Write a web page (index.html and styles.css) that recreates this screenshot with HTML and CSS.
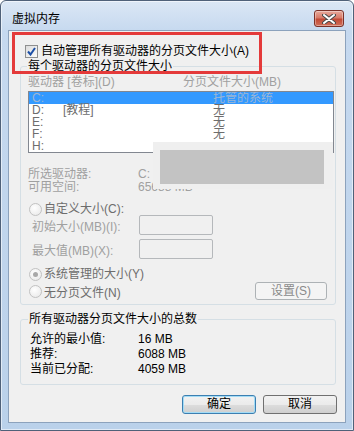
FILE: index.html
```html
<!DOCTYPE html>
<html lang="zh-CN">
<head>
    <meta charset="UTF-8">
    <title>虚拟内存</title>
    <link rel="stylesheet" href="styles.css">
</head>
<body>
    <div class="window">
        <div class="titlebar">
            <span class="title">虚拟内存</span>
            <button class="close-btn" type="button">
                <svg width="14" height="10" viewBox="0 0 14 10">
                    <path d="M2 1 L12 9 M12 1 L2 9" stroke="#4a4a4a" stroke-width="4" stroke-linecap="round"/>
                    <path d="M2 1 L12 9 M12 1 L2 9" stroke="#fff" stroke-width="2" stroke-linecap="round"/>
                </svg>
            </button>
        </div>

        <div class="client">
            <!-- highlight drawn over the dialog -->
            <div class="mark"></div>

            <label class="auto-row">
                <span class="checkbox">
                    <svg width="9" height="9" viewBox="0 0 9 9">
                        <path d="M1 4.5 L3.5 7.5 L8 1" fill="none" stroke="#1c4fa6" stroke-width="2"/>
                    </svg>
                </span>
                自动管理所有驱动器的分页文件大小(A)
            </label>

            <fieldset class="group">
                <legend>每个驱动器的分页文件大小</legend>

                <div class="col-head">
                    <span class="col-drive">驱动器 [卷标](D)</span>
                    <span>分页文件大小(MB)</span>
                </div>

                <div class="drive-list">
                    <div class="drive-row selected"><span class="d-letter">C:</span><span class="d-label"></span><span>托管的系统</span></div>
                    <div class="drive-row"><span class="d-letter">D:</span><span class="d-label">[教程]</span><span>无</span></div>
                    <div class="drive-row"><span class="d-letter">E:</span><span class="d-label"></span><span>无</span></div>
                    <div class="drive-row"><span class="d-letter">F:</span><span class="d-label"></span><span>无</span></div>
                    <div class="drive-row"><span class="d-letter">H:</span><span class="d-label"></span><span></span></div>
                </div>

                <div class="info">
                    <div class="info-row"><span class="info-key">所选驱动器:</span><span>C:</span></div>
                    <div class="info-row"><span class="info-key">可用空间:</span><span>65688 MB</span></div>
                </div>

                <div class="radio-row custom">
                    <span class="radio"></span>自定义大小(C):
                </div>
                <div class="size-row first">
                    <span class="size-key">初始大小(MB)(I):</span>
                    <span class="size-input"></span>
                </div>
                <div class="size-row">
                    <span class="size-key">最大值(MB)(X):</span>
                    <span class="size-input"></span>
                </div>

                <div class="radio-row system">
                    <span class="radio checked"></span>系统管理的大小(Y)
                </div>
                <div class="radio-row none">
                    <span class="radio-label"><span class="radio"></span>无分页文件(N)</span>
                    <button class="btn disabled" type="button">设置(S)</button>
                </div>
            </fieldset>

            <fieldset class="group totals">
                <legend>所有驱动器分页文件大小的总数</legend>
                <div class="total-row first"><span class="total-key">允许的最小值:</span><span>16 MB</span></div>
                <div class="total-row"><span class="total-key">推荐:</span><span>6088 MB</span></div>
                <div class="total-row"><span class="total-key">当前已分配:</span><span>4059 MB</span></div>
            </fieldset>

            <div class="actions">
                <button class="btn default" type="button">确定</button>
                <button class="btn" type="button">取消</button>
            </div>

            <!-- redacted area -->
            <div class="redact"><div class="redact-inner"></div></div>
        </div>
    </div>
</body>
</html>
```

FILE: styles.css
```css
* {
    box-sizing: border-box;
}
body {
    margin: 0;
    font-family: "Liberation Sans", "Noto Sans CJK SC", sans-serif;
    font-size: 12px;
    color: #000;
}
.window {
    width: 354px;
    height: 431px;
    padding: 0 7px 7px 7px;
    border: 1px solid #4f6179;
    border-radius: 6px 6px 0 0;
    background: linear-gradient(#dbe7f5, #c6d9ef 30px, #bad1ea);
    box-shadow: inset 0 0 0 1px rgba(255, 255, 255, 0.55);
}
.titlebar {
    height: 29px;
    display: flex;
    justify-content: space-between;
    align-items: flex-start;
    padding: 9px 2px 0 4px;
}
.title {
    margin-top: 2px;
    line-height: 14px;
}
.close-btn {
    width: 30px;
    height: 17px;
    padding: 0;
    display: flex;
    align-items: center;
    justify-content: center;
    border: 1px solid #7b3128;
    border-radius: 3px;
    background: linear-gradient(#e8aa9c, #d87a68 45%, #c24a36 55%, #d0705a);
    box-shadow: inset 0 0 0 1px rgba(255, 255, 255, 0.35);
}
.client {
    position: relative;
    height: 393px;
    border: 1px solid #8ca2bc;
    background-color: #f0f0f0;
}
.mark {
    position: absolute;
    left: 3px;
    top: 1px;
    width: 250px;
    height: 42px;
    border: 3px solid #e43a3a;
    z-index: 2;
}
.auto-row {
    display: flex;
    align-items: center;
    gap: 3px;
    margin: 13px 0 0 16px;
    line-height: 14px;
}
.checkbox {
    width: 13px;
    height: 13px;
    display: flex;
    align-items: center;
    justify-content: center;
    border: 1px solid #8e8f8f;
    background: linear-gradient(135deg, #dcdcdc, #fbfbfb);
}

/* group boxes */
.group {
    margin: 1px 9px 0 11px;
    padding: 0 0 4px 0;
    border: 1px solid #d5dfe5;
    border-radius: 3px;
    min-width: 0;
}
.group legend {
    margin-left: 6px;
    padding: 0 1px;
    line-height: 14px;
}
.col-head {
    display: flex;
    margin: 2px 0 0 7px;
    line-height: 14px;
    color: #a0a0a0;
}
.col-drive {
    width: 155px;
}
.drive-list {
    height: 62px;
    margin: 2px 1px 0 7px;
    border: 1px solid #828790;
    background-color: #fff;
    overflow: hidden;
}
.drive-row {
    display: flex;
    height: 12px;
    line-height: 12px;
    padding-left: 3px;
    color: #6d6d6d;
}
.drive-row.selected {
    background-color: #3399ff;
    color: #9db6d3;
}
.d-letter {
    width: 31px;
}
.d-label {
    width: 150px;
}
.info {
    margin: 15px 0 0 7px;
    color: #a0a0a0;
}
.info-row {
    display: flex;
    line-height: 13px;
}
.info-key {
    width: 110px;
}
.radio-row {
    display: flex;
    align-items: center;
    gap: 2px;
    margin-left: 8px;
    color: #6d6d6d;
}
.radio-row.custom {
    margin-top: 10px;
    line-height: 11px;
    height: 11px;
}
.radio-row.system {
    margin-top: 8px;
    line-height: 14px;
}
.radio-row.none {
    justify-content: space-between;
    margin: 1px 8px 0 8px;
    height: 18px;
}
.radio-label {
    display: flex;
    align-items: center;
    gap: 2px;
}
.radio {
    width: 13px;
    height: 13px;
    border-radius: 50%;
    border: 1px solid #c2c2c2;
    background: radial-gradient(circle at 40% 35%, #ffffff, #e6e6e6);
    display: flex;
    align-items: center;
    justify-content: center;
}
.radio.checked::after {
    content: "";
    width: 5px;
    height: 5px;
    border-radius: 50%;
    background-color: #a8a8a8;
}
.size-row {
    display: flex;
    align-items: center;
    height: 20px;
    margin: 4px 0 0 11px;
    color: #a0a0a0;
}
.size-row.first {
    margin-top: 0;
}
.size-key {
    width: 107px;
}
.size-input {
    width: 74px;
    height: 20px;
    border: 1px solid #b5b8bb;
    border-radius: 2px;
    background-color: #f0f0f0;
}

/* totals */
.totals {
    margin-top: 7px;
    padding-bottom: 7px;
}
.totals legend {
    margin-left: 7px;
}
.total-row {
    display: flex;
    line-height: 15px;
    margin-left: 9px;
}
.total-row.first {
    margin-top: 6px;
}
.total-key {
    width: 108px;
}

/* buttons */
.actions {
    display: flex;
    justify-content: flex-end;
    gap: 7px;
    margin: 10px 8px 0 0;
}
.btn {
    width: 74px;
    height: 19px;
    padding: 0;
    font-family: inherit;
    font-size: 12px;
    line-height: 17px;
    color: #000;
    border: 1px solid #707070;
    border-radius: 3px;
    background: linear-gradient(#f2f2f2, #ebebeb 50%, #dddddd 51%, #cfcfcf);
}
.btn.default {
    border-color: #3c7fb1;
    box-shadow: inset 0 0 0 1px #a3dcf6;
}
.btn.disabled {
    width: 72px;
    height: 18px;
    line-height: 16px;
    color: #8a8a8a;
    border-color: #adb2b5;
    background: #f4f4f4;
}

.redact {
    position: absolute;
    left: 144px;
    top: 111px;
    width: 180px;
    height: 47px;
    padding: 8px 9px 5px 7px;
    background-color: #efefef;
}
.redact-inner {
    height: 34px;
    background-color: #c3c3c3;
}
```
